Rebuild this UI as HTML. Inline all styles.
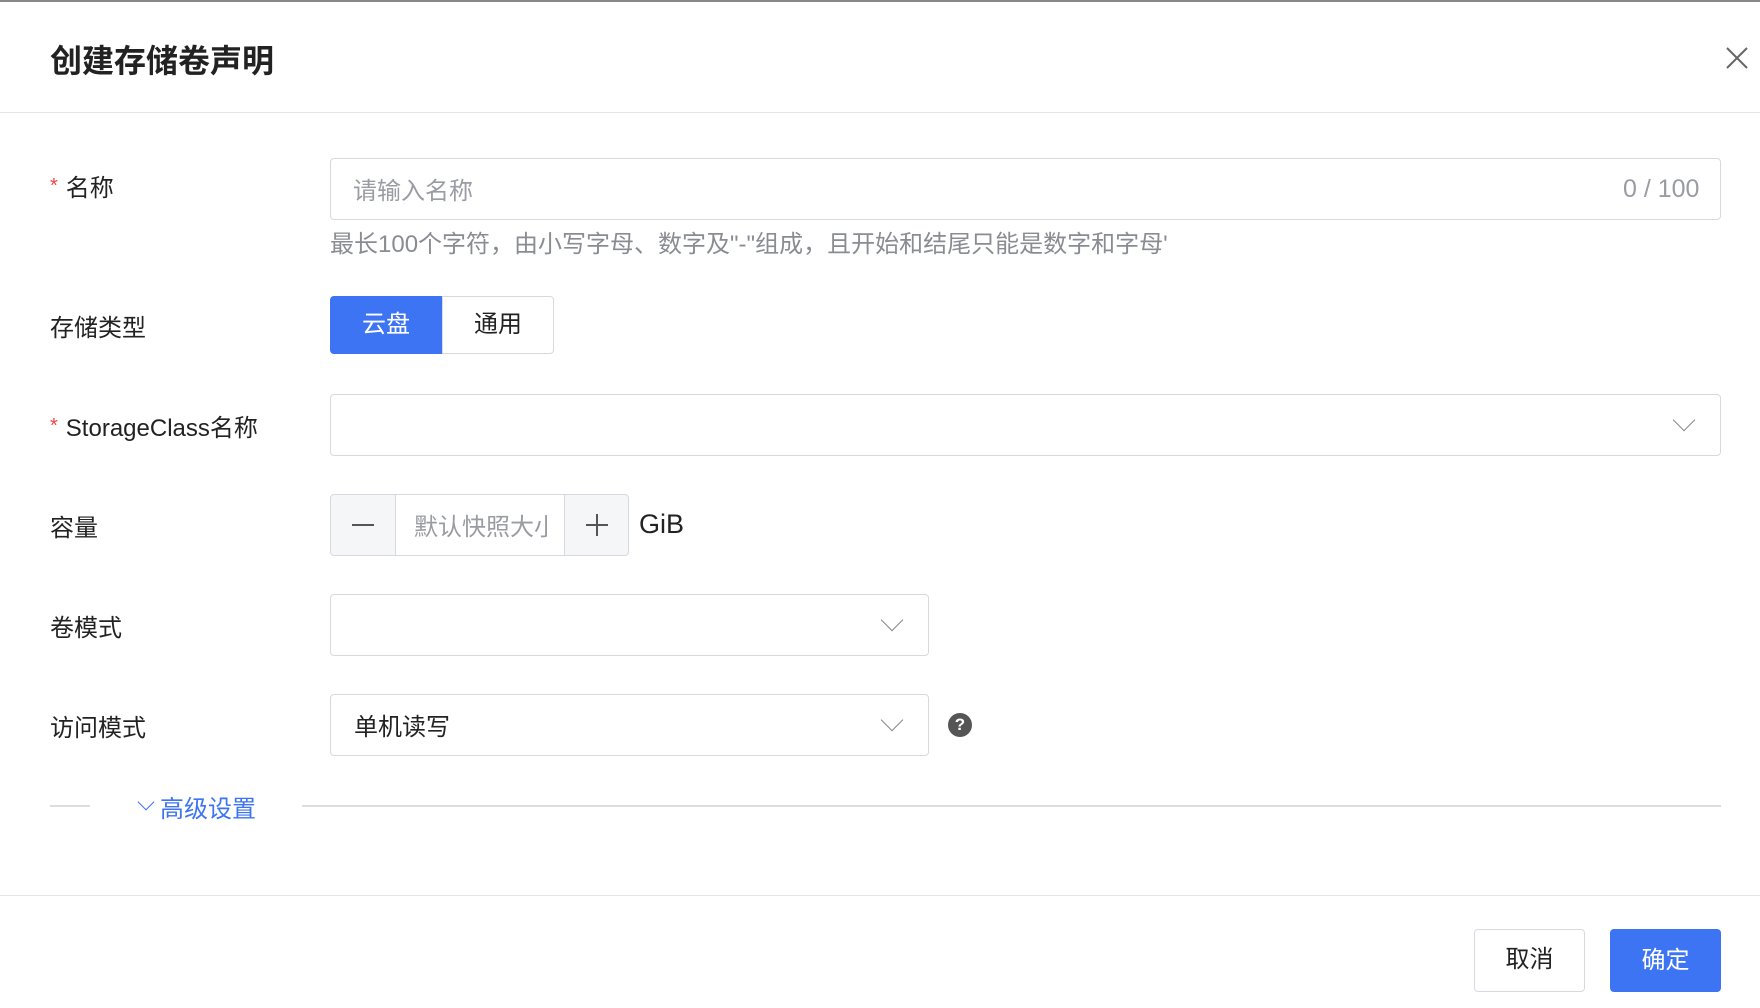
<!DOCTYPE html>
<html><head><meta charset="utf-8"><style>
*{box-sizing:border-box;margin:0;padding:0}
body{width:1760px;height:1008px;background:#fff;font-family:"Liberation Sans","Noto Sans CJK SC",sans-serif;color:#222;position:relative;overflow:hidden}
.a{position:absolute}
.topline{left:0;top:0;width:1760px;height:2px;background:#888}
.title{left:50px;top:36px;font-size:32px;font-weight:bold;color:#222}
.hd{left:0;top:112px;width:1760px;height:1px;background:#e3e5ea}
.lbl{left:50px;font-size:24px;color:#222}
.req{color:#f0443b;margin-right:8px;font-size:20px;display:inline-block;vertical-align:middle;position:relative;top:-3px}
.box{border:1.5px solid #d7d9de;border-radius:4px;background:#fff}
.ph{color:#9a9ca3;font-size:24px}
.chev{width:16px;height:16px;border-right:1.8px solid #888;border-bottom:1.8px solid #888;transform:rotate(45deg)}
.btn{border-radius:4px;font-size:24px;text-align:center}
</style></head><body>
<div class="a topline"></div>
<div class="a title">创建存储卷声明</div>
<svg class="a" style="left:1726px;top:47px" width="22" height="22" viewBox="0 0 22 22"><path d="M1 1L21 21M21 1L1 21" stroke="#666" stroke-width="2"/></svg>
<div class="a hd"></div>

<div class="a lbl" style="top:168px"><span class="req">*</span>名称</div>
<div class="a box" style="left:330px;top:158px;width:1391px;height:62px"></div>
<div class="a ph" style="left:353px;top:171px">请输入名称</div>
<div class="a ph" style="left:1623px;top:175px;font-size:25px">0 / 100</div>
<div class="a" style="left:330px;top:224px;font-size:24px;color:#8a8c93">最长100个字符，由小写字母、数字及"-"组成，且开始和结尾只能是数字和字母'</div>

<div class="a lbl" style="top:308px">存储类型</div>
<div class="a btn" style="left:330px;top:296px;width:112px;height:58px;background:#3c74f3;color:#fff;line-height:58px;border-radius:4px 0 0 4px">云盘</div>
<div class="a btn box" style="left:442px;top:296px;width:112px;height:58px;line-height:55px;border-radius:0 4px 4px 0">通用</div>

<div class="a lbl" style="top:408px"><span class="req">*</span>StorageClass名称</div>
<div class="a box" style="left:330px;top:394px;width:1391px;height:62px"></div>
<div class="a chev" style="left:1676px;top:412px"></div>

<div class="a lbl" style="top:508px">容量</div>
<div class="a box" style="left:330px;top:494px;width:299px;height:62px;background:#f5f6f8"></div>
<div class="a" style="left:395px;top:495px;width:170px;height:60px;background:#fff;border-left:1.5px solid #d7d9de;border-right:1.5px solid #d7d9de"></div>
<div class="a" style="left:352px;top:524px;width:22px;height:2px;background:#555"></div>
<div class="a" style="left:586px;top:524px;width:22px;height:2px;background:#555"></div>
<div class="a" style="left:596px;top:514px;width:2px;height:22px;background:#555"></div>
<div class="a ph" style="left:414px;top:507px;width:133px;overflow:hidden;white-space:nowrap">默认快照大小</div>
<div class="a" style="left:639px;top:509px;font-size:27px">GiB</div>

<div class="a lbl" style="top:608px">卷模式</div>
<div class="a box" style="left:330px;top:594px;width:599px;height:62px"></div>
<div class="a chev" style="left:884px;top:612px"></div>

<div class="a lbl" style="top:708px">访问模式</div>
<div class="a box" style="left:330px;top:694px;width:599px;height:62px"></div>
<div class="a" style="left:354px;top:707px;font-size:24px">单机读写</div>
<div class="a chev" style="left:884px;top:712px"></div>
<div class="a" style="left:948px;top:713px;width:24px;height:24px;border-radius:50%;background:#555;color:#fff;font-size:17px;font-weight:bold;text-align:center;line-height:24px">?</div>

<div class="a" style="left:50px;top:805px;width:40px;height:1.5px;background:#ddd"></div>
<div class="a" style="left:140px;top:796px;width:12px;height:12px;border-right:1.8px solid #3c74f3;border-bottom:1.8px solid #3c74f3;transform:rotate(45deg)"></div>
<div class="a" style="left:160px;top:789px;font-size:24px;color:#3c74f3">高级设置</div>
<div class="a" style="left:302px;top:805px;width:1419px;height:1.5px;background:#ddd"></div>

<div class="a" style="left:0;top:895px;width:1760px;height:1px;background:#e3e5ea"></div>
<div class="a btn box" style="left:1474px;top:929px;width:111px;height:63px;line-height:60px">取消</div>
<div class="a btn" style="left:1610px;top:929px;width:111px;height:63px;line-height:63px;background:#3c74f3;color:#fff">确定</div>
</body></html>
